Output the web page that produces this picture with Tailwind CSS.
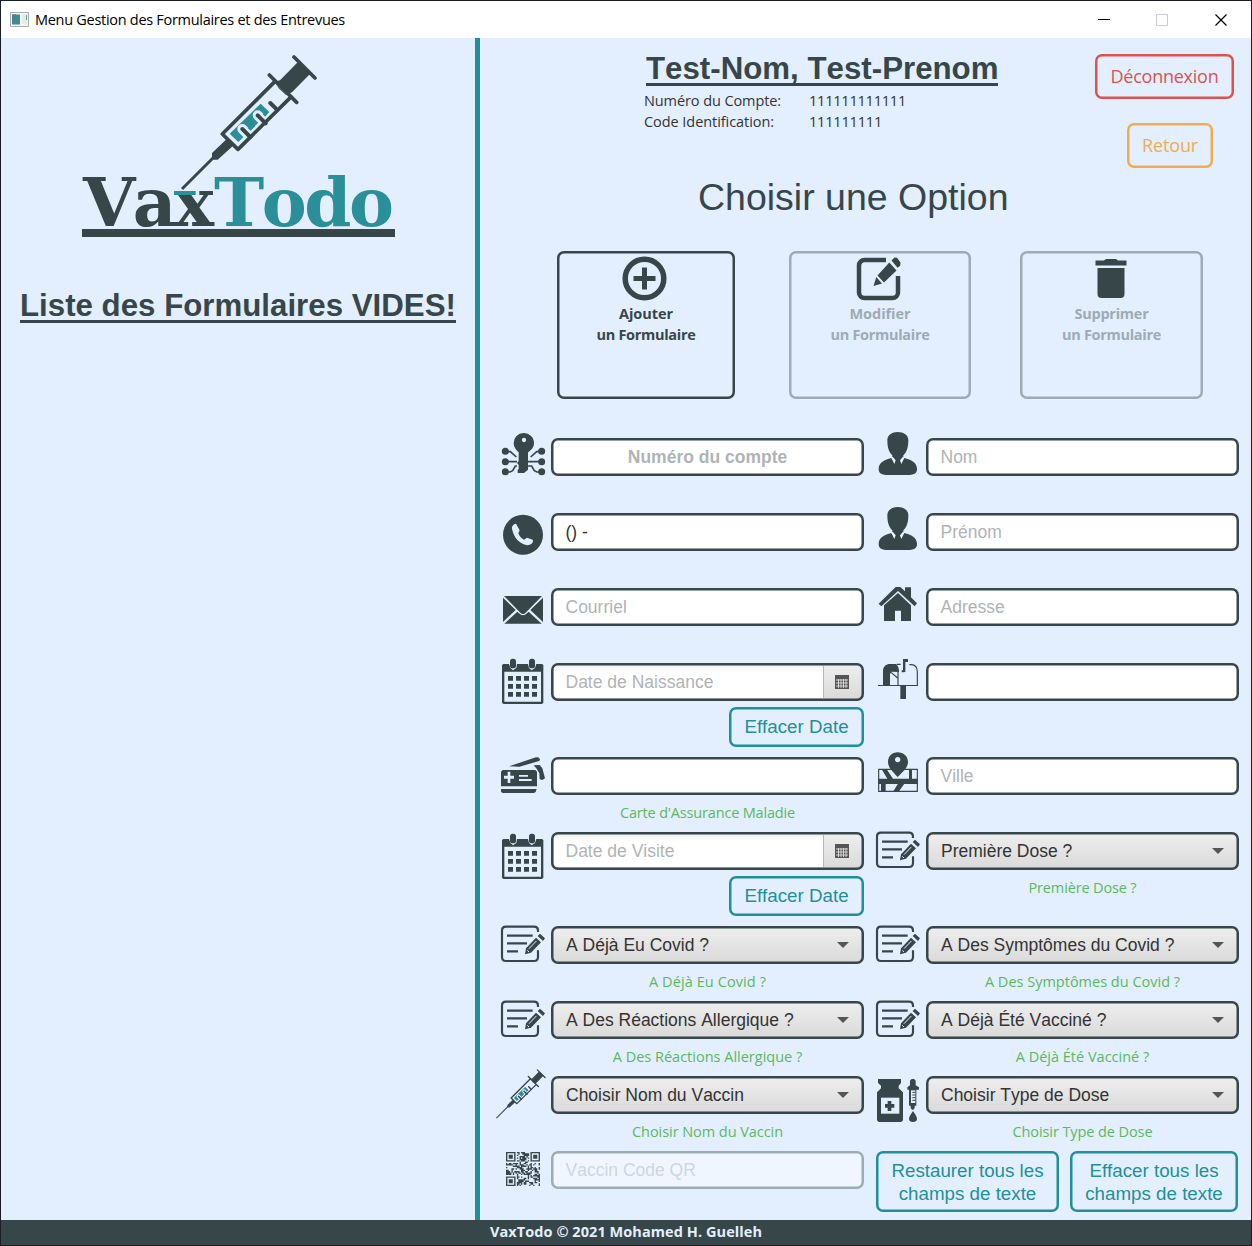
<!DOCTYPE html>
<html lang="fr">
<head>
<meta charset="utf-8">
<title>Menu Gestion des Formulaires et des Entrevues</title>
<script src="https://cdn.jsdelivr.net/npm/@tailwindcss/browser@4"></script>
</head>
<body class="w-[1252px] h-[1246px] overflow-hidden [font-kerning:none]">
<svg class="hidden">
  <symbol id="i-key" viewBox="15 30 168 168">
    <path d="M101 39a30 30 0 0 0-30 31c0 11 7 20 15 27v26l-5 6 5 6v12l-3 3v9h19l12-10V97c10-6 18-16 18-27a30 30 0 0 0-31-31z"/>
    <circle cx="102" cy="60" r="6.500" fill="#e3efff"/>
    <g fill="none" stroke="#374649" stroke-width="5"><path d="M46 95h15l18 16M46 125h35M46 156h14l8-4 8-14h5M155 95h-15l-18 16M155 125h-41M155 156h-14l-8-4-8-14h-11"/></g>
    <circle cx="46" cy="94" r="10.500"/><circle cx="46" cy="125" r="10.500"/><circle cx="46" cy="155" r="10.500"/>
    <circle cx="155" cy="94" r="10.500"/><circle cx="155" cy="125" r="10.500"/><circle cx="155" cy="155" r="10.500"/>
  </symbol>
  <symbol id="i-user" viewBox="15 30 168 168">
    <path d="M98 36c-17 0-31 9-31 24 0 20 4 36 15 46v9l5 15h23l5-15v-9c11-10 15-26 15-46 0-15-14-24-32-24z"/>
    <path d="M79 114c-20 6-38 12-38 34 0 11 9 17 22 17h71c13 0 22-6 22-17 0-22-18-28-38-34l-10 12H88z"/>
    <path d="M79 113l4-3 9 11-4 11zM118 113l-4-3-9 11 4 11z" fill="#eef5ff"/>
  </symbol>
  <symbol id="i-phone" viewBox="15 255 168 168">
    <circle cx="99" cy="344.500" r="60"/>
    <path d="M78 311c-10 2-14 9-11 19 5 23 20 40 42 45 9 2 18-2 20-11l-1-5-17-6-9 6c-8-4-14-10-17-19l4-9z" fill="#e3efff"/>
  </symbol>
  <symbol id="i-mail" viewBox="15 480 168 168">
    <path d="M42 528h114l-49 50c-5 5-11 5-16 0zM39 533l38 37-38 36zM159 533l-38 37 38 36zM43 611l39-36 5 5c8 8 16 8 24 0l5-5 39 36z"/>
  </symbol>
  <symbol id="i-home" viewBox="15 480 168 168">
    <path d="M99 519l39 37v47h-30v-31H90v31H57v-47z"/>
    <path d="M92 501h14l14 13v-12h18v30l18 18-7 9-50-46-50 46-8-8z"/>
  </symbol>
  <symbol id="i-cal" viewBox="15 30 168 168">
    <path fill-rule="evenodd" d="M40 57h17l4 12 8 7 10-7 2-12h33l3 12 8 7 10-7 4-12h17l4 3v114l-5 3H41l-5-3V60zM43 80v90h110V80z"/>
    <rect x="60" y="41" width="18" height="29" rx="8"/><rect x="117" y="41" width="18" height="29" rx="8"/>
    <path d="M54 93h15v14H54zM78 93h15v14H78zM102 93h15v14h-15zM126 93h15v14h-15zM54 117h15v14H54zM78 117h15v14H78zM102 117h15v14h-15zM126 117h15v14h-15zM54 141h15v14H54zM78 141h15v14H78zM102 141h15v14h-15zM126 141h15v14h-15z"/>
  </symbol>
  <symbol id="i-mailbox" viewBox="15 30 168 168">
    <path d="M54 121V78c0-13 9-21 21-21h18c6 5 9 12 9 24l-23-1-4 8v33zM106 122h17v40h-17z"/>
    <path d="M39 121.500h120M99 74v46M78 82l20 17M133 59h5c14 0 19 9 19 22v40M95 58h12" fill="none" stroke="#374649" stroke-width="3.500"/>
    <path d="M114 42h15v9h-8v30h-7zM110 76h8v6h-8z"/>
  </symbol>
  <symbol id="i-card" viewBox="15 312 168 168">
    <path d="M57 364l72-24c9-4 17-6 21 3l-2 5-60 17zM131 361l18-1 8 10 8 30-8 5-8-2-1-18-8-14z"/>
    <path fill-rule="evenodd" d="M38 375h98l5 5v44H33v-44zM53 380v12H42v9h11v13h8v-13h11v-9H61v-12zM87 390v5h27v-5zM87 402v6h38v-6z"/>
    <path d="M33 432h107l-3 9-5 3H38l-5-4z"/>
  </symbol>
  <symbol id="i-map" viewBox="15 312 168 168">
    <path d="M41 373h116v66H41z" fill="none" stroke="#374649" stroke-width="3.500"/>
    <path d="M39 401h120v16H39zM48 416h14v24H48zM50 373h15l20 30H68zM132 373h9v30h-9zM99 416h19l-17 24H84z"/>
    <path fill-rule="evenodd" d="M98 322c-17 0-29 12-29 29 0 17 15 30 29 45 15-15 31-28 31-45 0-17-14-29-31-29zM98 336a8 8 0 1 0 .1 0z"/>
  </symbol>
  <symbol id="i-note" viewBox="15 537 168 168">
    <path d="M144 579v-4c0-7-5-12-12-12H48c-7 0-12 5-12 12v79c0 7 5 12 12 12h84c7 0 12-5 12-12v-20" fill="none" stroke="#374649" stroke-width="6.500"/>
    <path d="M51 590h77M51 613h60M51 637h33" fill="none" stroke="#374649" stroke-width="6.500"/>
    <path d="M143 591l7-7 15 14-6 8zM138 596l15 14-30 31-18 5 3-18z"/>
    <path d="M139 606l-22 23M112 634l5 5" stroke="#e3efff" stroke-width="3"/>
  </symbol>
  <symbol id="i-syringe" viewBox="0 0 480 480">
    <path d="M272 176l26 25-93 90-26-25z" fill="#2b8f99"/>
    <path d="M217 252l30 30M263 211l30 30M301 174l20 20" stroke="#e3efff" stroke-width="30" stroke-linecap="round"/>
    <path d="M233 249l9 8 14-14-8-9zM278 208l8 7 9-12-7-6z" fill="#2b8f99"/>
    <path d="M217 252l24 24M263 211l24 24M301 174l20 20" stroke="#374649" stroke-width="12" stroke-linecap="round"/>
    <path d="M330 106l56-57 36 36-56 57-18 8-22-20-12-20z"/>
    <path d="M322 117l30 30" stroke="#e3efff" stroke-width="7"/>
    <g fill="none" stroke="#374649" stroke-linecap="round" stroke-linejoin="round" stroke-width="11">
      <path d="M372 36l63 63M298 90l82 82M315 109L157 267l47 46 160-158"/>
    </g>
    <path d="M36 432l96-96" stroke="#374649" stroke-width="9"/>
    <path d="M171 281l20 20-48 43-12 0-5-6v-14z"/>
  </symbol>
  <symbol id="i-vial" viewBox="15 24 168 168">
    <path d="M39 57h69v12l-7 8v8l13 12v84l-5 5H41l-5-5V97l12-12v-8l-9-8z"/>
    <path d="M48 113h55v48H48z" fill="#e3efff"/>
    <path d="M68 123h11v9h9v11h-9v10H68v-10h-8v-11h8zM135 76v-13c2-8 15-8 17 0v13l10 6v7h-35v-7zM132 87h22v50h-5v7l-4 5h-4l-4-5v-7h-5zM144 153c5 8 12 16 12 24 0 6-5 9-12 9s-12-3-12-9c0-8 7-16 12-24z"/>
    <path d="M138 91h13v38h-13z" fill="#e3efff"/><path d="M142 97h9M142 105h9M142 113h9M142 121h9" stroke="#374649" stroke-width="3"/>
  </symbol>
  <symbol id="i-datebtn" viewBox="0 0 14 14">
    <path d="M0 0h14v14H0z" fill="#555"/>
    <path d="M1 5h12M1 8h12M1 11h12M3.500 4v9M6 4v9M8.500 4v9M11 4v9" stroke="#e0e0e0" stroke-width=".9"/>
  </symbol>
</svg>

<div class="flex flex-col w-full h-full border border-[#1b1d26] bg-[#e3efff] text-[#374649]">
  <!-- Barre de titre -->
  <header class="flex h-[37px] shrink-0 items-center bg-white pl-[9px] pr-6 text-black">
    <svg class="w-[19px] h-[15px]" viewBox="0 0 19 15"><path d="M.5.500h18v14H.5z" fill="#f4f4f4" stroke="#a9adb0"/><path d="M2 2.500h8v10H2z" fill="#3f8d86"/><path d="M2 2.500h4v5H2z" fill="#4a7f9c"/><path d="M12 2.500h5v10h-5z" fill="#e4ecec"/><path d="M16.500 3v5" stroke="#5aa892"/></svg>
    <span class="ml-[6px] whitespace-nowrap font-['Open_Sans',sans-serif] text-[14.500px] tracking-[-0.288px]">Menu Gestion des Formulaires et des Entrevues</span>
    <div class="ml-auto flex items-center gap-[46px]">
      <svg class="w-3 h-3" viewBox="0 0 12 12"><path d="M0 5.500h12" stroke="#000"/></svg>
      <svg class="w-3 h-3" viewBox="0 0 12 12"><path d="M.5.500h11v11H.5z" fill="none" stroke="#ccc"/></svg>
      <svg class="ml-px w-3 h-3" viewBox="0 0 12 12"><path d="M.5.500l11 11M11.500.500l-11 11" stroke="#000" stroke-width="1.200"/></svg>
    </div>
  </header>

  <div class="flex h-[1182px] shrink-0">
    <!-- Liste des formulaires -->
    <aside class="w-[479px] shrink-0 border-r-[5px] border-[#1f8f99]">
      <svg class="block w-[474px] h-[220px]" viewBox="1 38 474 220">
        <g font-family="'DejaVu Serif',serif" font-weight="bold" font-size="67.500">
          <text x="83" y="226" fill="#374649" textLength="131">Vax</text>
          <text x="214" y="226" fill="#2b8f99" textLength="180">Todo</text>
        </g>
        <path d="M174 191h21v4h-21z" fill="#2b8f99"/>
        <use href="#i-syringe" x="170" y="45" width="160" height="160" fill="#374649"/>
        <path d="M82 229h313v8H82z" fill="#374649"/>
      </svg>
      <h2 class="ml-[19px] mt-[33px] inline-block whitespace-nowrap border-b-[3px] border-[#374649] font-['Liberation_Sans',Arial,sans-serif] text-[31.250px] font-bold leading-[29px]">Liste des Formulaires VIDES!</h2>
    </aside>

    <main class="flex-1">
      <div class="flex h-[132px] justify-between pl-[164px] pr-[17px]">
        <div class="pt-[16px] font-['Open_Sans',sans-serif] text-[14.500px] text-[#333]">
          <h1 class="ml-[2px] inline-block whitespace-nowrap border-b-[3px] border-[#374649] font-['Liberation_Sans',Arial,sans-serif] text-[31.250px] font-bold leading-[29px] text-[#374649]">Test-Nom, Test-Prenom</h1>
          <dl class="mt-[4px] grid grid-cols-[165px_auto] leading-[21px]">
            <dt class="tracking-[-0.094px]">Numéro du Compte:</dt><dd class="tracking-[-0.208px]">111111111111</dd>
            <dt class="tracking-[-0.061px]">Code Identification:</dt><dd class="tracking-[-0.181px]">111111111</dd>
          </dl>
        </div>
        <div class="flex flex-col items-end pt-4 font-['Open_Sans',sans-serif] text-[18px]">
          <button class="h-[45px] w-[139px] rounded-[7px] tracking-[-0.240px] text-[#d9534f] shadow-[inset_0_0_0_2.5px_#d9534f]">Déconnexion</button>
          <button class="mt-6 mr-[21px] h-[45px] w-[86px] rounded-[7px] tracking-[-0.143px] text-[#f0ad4e] shadow-[inset_0_0_0_2.5px_#f0ad4e]">Retour</button>
        </div>
      </div>
      <p class="pl-[218px] font-['Liberation_Sans',Arial,sans-serif] text-[37.500px] leading-[54px]">Choisir une Option</p>

      <div class="mt-[27px] flex pl-[77px] font-['Open_Sans',sans-serif] text-[14.500px] font-bold leading-[21px]">
        <button class="flex h-[148px] w-[178px] flex-col items-center rounded-[7px] pt-[5px] shadow-[inset_0_0_0_2.5px_#374649]">
          <svg class="mr-[3px] w-[45px] h-[45px]" viewBox="0 0 45 45"><circle cx="22.500" cy="22.500" r="19.300" fill="none" stroke="#374649" stroke-width="5.500"/><path d="M20 11.500h5V20h8.500v5H25v8.500h-5V25h-8.500v-5H20z" fill="#374649"/></svg>
          <span class="mt-[2px] tracking-[-0.056px]">Ajouter</span><span class="tracking-[-0.298px]">un Formulaire</span>
        </button>
        <button class="ml-[54px] flex h-[148px] w-[182px] flex-col items-center rounded-[7px] pt-[5px] text-[#9dabb4] shadow-[inset_0_0_0_2.5px_#9dabb4]">
          <svg class="mr-[3px] w-[45px] h-[45px]" viewBox="0 0 45 45" fill="#374649"><path d="M30 4H8.500A5.500 5.500 0 0 0 3 9.500v27A5.500 5.500 0 0 0 8.500 42h28a5.500 5.500 0 0 0 5.500-5.500V20" fill="none" stroke="#374649" stroke-width="4.500"/><path d="M35.500 4.500l3-3 2.500.3 3.500 4.700-.3 3.200-2.700 2zM33.300 6.500l7.200 8L28 26.500l-6.500-7zM20.300 21l5.700 6.500-8.500 2.500z"/></svg>
          <span class="mt-[2px] tracking-[-0.055px]">Modifier</span><span class="tracking-[-0.298px]">un Formulaire</span>
        </button>
        <button class="ml-[49px] flex h-[148px] w-[183px] flex-col items-center rounded-[7px] pt-[5px] text-[#9dabb4] shadow-[inset_0_0_0_2.5px_#9dabb4]">
          <svg class="mr-px w-[45px] h-[45px]" viewBox="0 0 45 45" fill="#374649"><path d="M6.500 4.500H15L17 3h10l2 1.500h8.500v5h-31zM8.500 12h27v26a4 4 0 0 1-4 4h-19a4 4 0 0 1-4-4z"/></svg>
          <span class="mt-[2px] tracking-[-0.253px]">Supprimer</span><span class="tracking-[-0.298px]">un Formulaire</span>
        </button>
      </div>

      <!-- Champs du formulaire -->
      <form class="mt-[39px] grid grid-cols-[375px_375px] grid-rows-[75px_75px_75px_94px_75px_94px_75px_75px_75px_69px] pl-[15px] font-['Liberation_Sans',Arial,sans-serif] text-[17.500px] text-[#b0b3b5] leading-[38px] [&_svg]:fill-[#374649] [&>div]:flex [&>div>svg]:-mt-2 [&>div>svg]:h-14 [&>div>svg]:w-14 [&>div>svg]:shrink-0 [&>div>div]:w-[313px]">
        <div><svg><use href="#i-key"/></svg><div><div class="h-[38px] rounded-[7px] bg-white text-center font-bold shadow-[inset_0_0_0_2.5px_#374649]">Numéro du compte</div></div></div>
        <div><svg><use href="#i-user"/></svg><div><div class="h-[38px] rounded-[7px] bg-white pl-[14.500px] shadow-[inset_0_0_0_2.5px_#374649]">Nom</div></div></div>

        <div><svg><use href="#i-phone"/></svg><div><div class="h-[38px] rounded-[7px] bg-white pl-[14.500px] text-[#333] shadow-[inset_0_0_0_2.5px_#374649]">() -</div></div></div>
        <div><svg><use href="#i-user"/></svg><div><div class="h-[38px] rounded-[7px] bg-white pl-[14.500px] shadow-[inset_0_0_0_2.5px_#374649]">Prénom</div></div></div>

        <div><svg><use href="#i-mail"/></svg><div><div class="h-[38px] rounded-[7px] bg-white pl-[14.500px] shadow-[inset_0_0_0_2.5px_#374649]">Courriel</div></div></div>
        <div><svg><use href="#i-home"/></svg><div><div class="h-[38px] rounded-[7px] bg-white pl-[14.500px] shadow-[inset_0_0_0_2.5px_#374649]">Adresse</div></div></div>

        <div><svg><use href="#i-cal"/></svg><div>
          <div class="flex h-[38px] rounded-[7px] bg-linear-to-b from-[#efefef] to-[#d9d9d9] p-[3px] shadow-[inset_0_0_0_2.5px_#374649]"><span class="h-8 w-[270px] rounded-l-[4px] border-r border-[#b8b8b8] bg-linear-to-b from-[#f2f2f2] to-white to-20% pl-[11.500px] leading-8">Date de Naissance</span><svg class="ml-[11px] mt-[9px] h-[14px] w-[14px]"><use href="#i-datebtn"/></svg></div>
          <button type="button" class="ml-[178px] mt-[6px] block h-10 w-[135px] rounded-[7px] text-[18.750px] text-[#1f8f99] shadow-[inset_0_0_0_2.5px_#1f8f99]">Effacer Date</button>
        </div></div>
        <div><svg><use href="#i-mailbox"/></svg><div><div class="h-[38px] rounded-[7px] bg-white shadow-[inset_0_0_0_2.5px_#374649]"></div></div></div>

        <div><svg><use href="#i-card"/></svg><div><div class="h-[38px] rounded-[7px] bg-white shadow-[inset_0_0_0_2.5px_#374649]"></div><p class="mt-2 text-center font-['Open_Sans',sans-serif] text-[14.500px] leading-5 tracking-[-0.174px] text-[#5cb85c]">Carte d'Assurance Maladie</p></div></div>
        <div><svg><use href="#i-map"/></svg><div><div class="h-[38px] rounded-[7px] bg-white pl-[14.500px] shadow-[inset_0_0_0_2.5px_#374649]">Ville</div></div></div>

        <div><svg class="translate-y-[6px]"><use href="#i-cal"/></svg><div>
          <div class="flex h-[38px] rounded-[7px] bg-linear-to-b from-[#efefef] to-[#d9d9d9] p-[3px] shadow-[inset_0_0_0_2.5px_#374649]"><span class="h-8 w-[270px] rounded-l-[4px] border-r border-[#b8b8b8] bg-linear-to-b from-[#f2f2f2] to-white to-20% pl-[11.500px] leading-8">Date de Visite</span><svg class="ml-[11px] mt-[9px] h-[14px] w-[14px]"><use href="#i-datebtn"/></svg></div>
          <button type="button" class="ml-[178px] mt-[6px] block h-10 w-[135px] rounded-[7px] text-[18.750px] text-[#1f8f99] shadow-[inset_0_0_0_2.5px_#1f8f99]">Effacer Date</button>
        </div></div>
        <div><svg><use href="#i-note"/></svg><div>
          <div class="flex h-[38px] items-center justify-between rounded-[7px] bg-linear-to-b from-[#efefef] to-[#d9d9d9] pl-[15px] pr-[15px] text-[#333] shadow-[inset_0_0_0_2.5px_#374649]">Première Dose ?<svg class="h-[6px] w-3" viewBox="0 0 12 6"><path d="M0 0h12L6 6z" fill="#555"/></svg></div>
          <p class="mt-2 text-center font-['Open_Sans',sans-serif] text-[14.500px] leading-5 tracking-[-0.146px] text-[#5cb85c]">Première Dose ?</p></div></div>

        <div><svg><use href="#i-note"/></svg><div>
          <div class="flex h-[38px] items-center justify-between rounded-[7px] bg-linear-to-b from-[#efefef] to-[#d9d9d9] pl-[15px] pr-[15px] text-[#333] shadow-[inset_0_0_0_2.5px_#374649]">A Déjà Eu Covid ?<svg class="h-[6px] w-3" viewBox="0 0 12 6"><path d="M0 0h12L6 6z" fill="#555"/></svg></div>
          <p class="mt-2 text-center font-['Open_Sans',sans-serif] text-[14.500px] leading-5 tracking-[0.090px] text-[#5cb85c]">A Déjà Eu Covid ?</p></div></div>
        <div><svg><use href="#i-note"/></svg><div>
          <div class="flex h-[38px] items-center justify-between rounded-[7px] bg-linear-to-b from-[#efefef] to-[#d9d9d9] pl-[15px] pr-[15px] text-[#333] shadow-[inset_0_0_0_2.5px_#374649]">A Des Symptômes du Covid ?<svg class="h-[6px] w-3" viewBox="0 0 12 6"><path d="M0 0h12L6 6z" fill="#555"/></svg></div>
          <p class="mt-2 text-center font-['Open_Sans',sans-serif] text-[14.500px] leading-5 text-[#5cb85c]">A Des Symptômes du Covid ?</p></div></div>

        <div><svg><use href="#i-note"/></svg><div>
          <div class="flex h-[38px] items-center justify-between rounded-[7px] bg-linear-to-b from-[#efefef] to-[#d9d9d9] pl-[15px] pr-[15px] text-[#333] shadow-[inset_0_0_0_2.5px_#374649]">A Des Réactions Allergique ?<svg class="h-[6px] w-3" viewBox="0 0 12 6"><path d="M0 0h12L6 6z" fill="#555"/></svg></div>
          <p class="mt-2 text-center font-['Open_Sans',sans-serif] text-[14.500px] leading-5 text-[#5cb85c]">A Des Réactions Allergique ?</p></div></div>
        <div><svg><use href="#i-note"/></svg><div>
          <div class="flex h-[38px] items-center justify-between rounded-[7px] bg-linear-to-b from-[#efefef] to-[#d9d9d9] pl-[15px] pr-[15px] text-[#333] shadow-[inset_0_0_0_2.5px_#374649]">A Déjà Été Vacciné ?<svg class="h-[6px] w-3" viewBox="0 0 12 6"><path d="M0 0h12L6 6z" fill="#555"/></svg></div>
          <p class="mt-2 text-center font-['Open_Sans',sans-serif] text-[14.500px] leading-5 text-[#5cb85c]">A Déjà Été Vacciné ?</p></div></div>

        <div><svg viewBox="0 0 56 56"><use href="#i-syringe" x="-3" y="-2.500" width="58.500" height="58.500"/></svg><div>
          <div class="flex h-[38px] items-center justify-between rounded-[7px] bg-linear-to-b from-[#efefef] to-[#d9d9d9] pl-[15px] pr-[15px] text-[#333] shadow-[inset_0_0_0_2.5px_#374649]">Choisir Nom du Vaccin<svg class="h-[6px] w-3" viewBox="0 0 12 6"><path d="M0 0h12L6 6z" fill="#555"/></svg></div>
          <p class="mt-2 text-center font-['Open_Sans',sans-serif] text-[14.500px] leading-5 tracking-[-0.057px] text-[#5cb85c]">Choisir Nom du Vaccin</p></div></div>
        <div><svg><use href="#i-vial"/></svg><div>
          <div class="flex h-[38px] items-center justify-between rounded-[7px] bg-linear-to-b from-[#efefef] to-[#d9d9d9] pl-[15px] pr-[15px] text-[#333] shadow-[inset_0_0_0_2.5px_#374649]">Choisir Type de Dose<svg class="h-[6px] w-3" viewBox="0 0 12 6"><path d="M0 0h12L6 6z" fill="#555"/></svg></div>
          <p class="mt-2 text-center font-['Open_Sans',sans-serif] text-[14.500px] leading-5 tracking-[-0.089px] text-[#5cb85c]">Choisir Type de Dose</p></div></div>

        <div><svg viewBox="0 0 56 56"><path id="qr" transform="translate(11 9) scale(1.36)"/></svg><div><div class="h-[38px] rounded-[7px] bg-[#eff6ff] pl-[14.500px] text-[#ced6de] shadow-[inset_0_0_0_2.5px_#9dabb4]">Vaccin Code QR</div></div></div>
        <div class="gap-[11px] pl-[6px] text-[18.750px] leading-[23px] text-[#1f8f99]">
          <button type="button" class="h-[61px] w-[183px] rounded-[7px] shadow-[inset_0_0_0_2.5px_#1f8f99]">Restaurer tous les<br>champs de texte</button>
          <button type="button" class="h-[61px] w-[168px] rounded-[7px] shadow-[inset_0_0_0_2.5px_#1f8f99]">Effacer tous les<br>champs de texte</button>
        </div>
      </form>
    </main>
  </div>

  <footer class="flex-1 bg-[#374649] text-center font-['Open_Sans',sans-serif] text-[14.500px] font-bold leading-[24px] tracking-[0.065px] text-[#e3efff]">VaxTodo © 2021 Mohamed H. Guelleh</footer>
</div>
<script>
  // Modules du code QR : trois repères de position et un remplissage pseudo-aléatoire
  const N = 25, inFinder = (x, y) => [[0, 0], [N - 7, 0], [0, N - 7]].find(([a, b]) => x >= a - 1 && x <= a + 7 && y >= b - 1 && y <= b + 7);
  let d = '', seed = 11;
  for (let y = 0; y < N; y++) for (let x = 0; x < N; x++) {
    seed = (seed * 1103515245 + 12345) % 2147483648;
    const f = inFinder(x, y);
    let on = (seed >> 12) % 20 < 11;
    if (f) { const r = Math.max(Math.abs(x - f[0] - 3), Math.abs(y - f[1] - 3)); on = r === 3 || r < 2; }
    if (on) d += `M${x} ${y}h1v1h-1z`;
  }
  document.getElementById('qr').setAttribute('d', d);
</script>
</body>
</html>
